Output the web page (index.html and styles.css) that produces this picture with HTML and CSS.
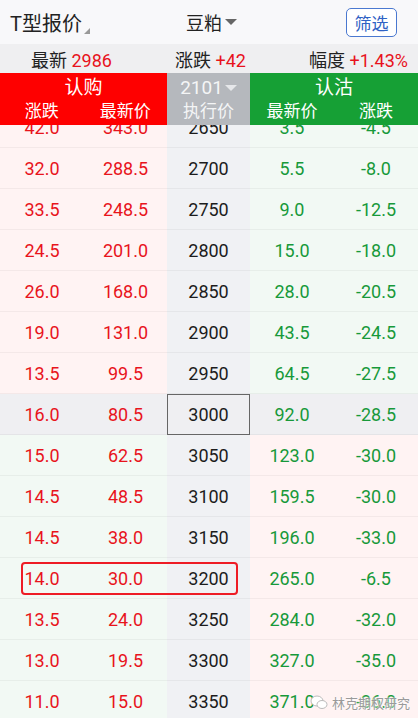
FILE: index.html
```html
<!DOCTYPE html>
<html lang="zh-CN">
<head>
    <meta charset="UTF-8" />
    <meta content="width=device-width, initial-scale=1.0" name="viewport" />
    <title>T型报价</title>
    <link rel="stylesheet" href="styles.css">
</head>
<body>

<div class="app">
    <!-- Top bar -->
    <header class="topbar">
        <div class="title">T型报价<span class="corner"></span></div>
        <div class="variety">豆粕<span class="caret"></span></div>
        <button class="filter-btn">筛选</button>
    </header>

    <!-- Underlying quote -->
    <div class="quote">
        <span>最新 <em>2986</em></span>
        <span>涨跌 <em>+42</em></span>
        <span>幅度 <em>+1.43%</em></span>
    </div>

    <!-- Table head -->
    <div class="thead">
        <div class="side call">
            <div class="side-name">认购</div>
            <div class="side-cols"><span>涨跌</span><span>最新价</span></div>
        </div>
        <div class="side strike">
            <div class="side-name">2101<span class="caret light"></span></div>
            <div class="side-cols"><span>执行价</span></div>
        </div>
        <div class="side put">
            <div class="side-name">认沽</div>
            <div class="side-cols"><span>最新价</span><span>涨跌</span></div>
        </div>
    </div>

    <!-- Rows -->
    <div class="viewport">
        <div class="rows" id="rows"></div>
        <div class="focus-box"></div>
        <div class="watermark">
            <svg width="18" height="15" viewBox="0 0 18 15">
                <ellipse cx="7" cy="6" rx="6" ry="5" fill="#fff" stroke="#bbb" stroke-width="1"/>
                <ellipse cx="12" cy="9.5" rx="5" ry="4" fill="#fff" stroke="#bbb" stroke-width="1"/>
            </svg>
            <span>林克期权研究</span>
        </div>
    </div>
</div>

<script>
  const rowsEl = document.getElementById('rows');

  // strike, call change, call price, put price, put change
  const quotes = [
    [2650, '42.0', '343.0', '3.5', '-4.5'],
    [2700, '32.0', '288.5', '5.5', '-8.0'],
    [2750, '33.5', '248.5', '9.0', '-12.5'],
    [2800, '24.5', '201.0', '15.0', '-18.0'],
    [2850, '26.0', '168.0', '28.0', '-20.5'],
    [2900, '19.0', '131.0', '43.5', '-24.5'],
    [2950, '13.5', '99.5', '64.5', '-27.5'],
    [3000, '16.0', '80.5', '92.0', '-28.5'],
    [3050, '15.0', '62.5', '123.0', '-30.0'],
    [3100, '14.5', '48.5', '159.5', '-30.0'],
    [3150, '14.5', '38.0', '196.0', '-33.0'],
    [3200, '14.0', '30.0', '265.0', '-6.5'],
    [3250, '13.5', '24.0', '284.0', '-32.0'],
    [3300, '13.0', '19.5', '327.0', '-35.0'],
    [3350, '11.0', '15.0', '371.0', '-36.0']
  ];
  const atm = 3000;

  quotes.forEach(([strike, cChg, cPx, pPx, pChg]) => {
    const row = document.createElement('div');
    row.classList.add('row');
    if (strike < atm) row.classList.add('call-itm');
    else if (strike > atm) row.classList.add('put-itm');
    else row.classList.add('atm');

    row.innerHTML =
      `<span class="cell up call-cell">${cChg}</span>` +
      `<span class="cell up call-cell">${cPx}</span>` +
      `<span class="cell strike-cell">${strike}</span>` +
      `<span class="cell down put-cell">${pPx}</span>` +
      `<span class="cell down put-cell">${pChg}</span>`;
    rowsEl.appendChild(row);
  });
</script>

</body>
</html>
```

FILE: styles.css
```css
* {
    box-sizing: border-box;
    margin: 0;
    padding: 0;
}

body {
    font-family: Roboto, "Noto Sans CJK SC", sans-serif;
    background: #ffffff;
    color: #222;
}

.app {
    width: 418px;
    height: 718px;
    overflow: hidden;
    box-shadow: inset 1px 0 0 #d6d6d6;
}

/* Top bar */
.topbar {
    height: 44px;
    display: flex;
    align-items: center;
    background: #f8f8fa;
    padding-left: 10px;
}

.title {
    font-size: 20px;
    width: 176px;
}

.corner {
    display: inline-block;
    width: 0;
    height: 0;
    margin-left: 2px;
    border-left: 6px solid transparent;
    border-bottom: 6px solid #999;
    vertical-align: -3px;
}

.variety {
    font-size: 18px;
    display: flex;
    align-items: center;
}

.caret {
    display: inline-block;
    width: 0;
    height: 0;
    margin-left: 3px;
    border-left: 6px solid transparent;
    border-right: 6px solid transparent;
    border-top: 6px solid #666;
}

.caret.light {
    border-top-color: #e6e7ea;
    margin-left: 2px;
    vertical-align: 3px;
}

.filter-btn {
    margin-left: auto;
    margin-right: 21px;
    width: 51px;
    height: 29px;
    border: 1px solid #4a78d0;
    border-radius: 5px;
    background: #fff;
    color: #2f62c4;
    font-size: 17px;
    font-family: inherit;
}

/* Quote line */
.quote {
    height: 29px;
    display: flex;
    align-items: center;
    justify-content: space-between;
    padding: 0 10px 0 31px;
    background: #efeff1;
    font-size: 18px;
    color: #222;
}

.quote em {
    font-style: normal;
    color: #e8121c;
}

/* Table head */
.thead {
    display: grid;
    grid-template-columns: 167px 83px 168px;
    height: 52px;
    color: #fff;
}

.side {
    display: flex;
    flex-direction: column;
    align-items: center;
    padding-top: 3px;
}

.side.call { background: #fe0000; }
.side.strike { background: #b5b8bd; color: #f4f5f6; }
.side.put { background: #16a035; }

.side-name {
    font-size: 19px;
    line-height: 24px;
}

.side-cols {
    display: flex;
    width: 100%;
    font-size: 17px;
    line-height: 22px;
}

.side-cols span {
    flex: 1;
    text-align: center;
}

/* Rows */
.viewport {
    position: relative;
    height: 593px;
    overflow: hidden;
}

.rows {
    margin-top: -18px;
}

.row {
    display: grid;
    grid-template-columns: 84px 83px 83px 84px 84px;
    height: 41px;
}

.cell {
    display: flex;
    align-items: center;
    justify-content: center;
    font-size: 18px;
    border-bottom: 1px solid rgba(0, 0, 0, 0.045);
}

.cell.up { color: #e8141c; }
.cell.down { color: #17993a; }

.strike-cell {
    background: #f0f1f4;
    color: #1c1c1c;
}

.call-itm .call-cell,
.put-itm .put-cell {
    background: #fff3f3;
}

.call-itm .put-cell,
.put-itm .call-cell {
    background: #f2f9f4;
}

.atm .cell {
    background: #efeff2;
}

.atm .strike-cell {
    border: 1px solid #666;
}

.focus-box {
    position: absolute;
    left: 21px;
    top: 437px;
    width: 217px;
    height: 33px;
    border: 2px solid #ee1c25;
    border-radius: 4px;
}

.watermark {
    position: absolute;
    right: 8px;
    bottom: 6px;
    display: flex;
    align-items: center;
    gap: 4px;
    font-size: 13px;
    color: #9a9a9a;
    text-shadow: 0 0 2px #fff, 0 0 2px #fff;
}
```
